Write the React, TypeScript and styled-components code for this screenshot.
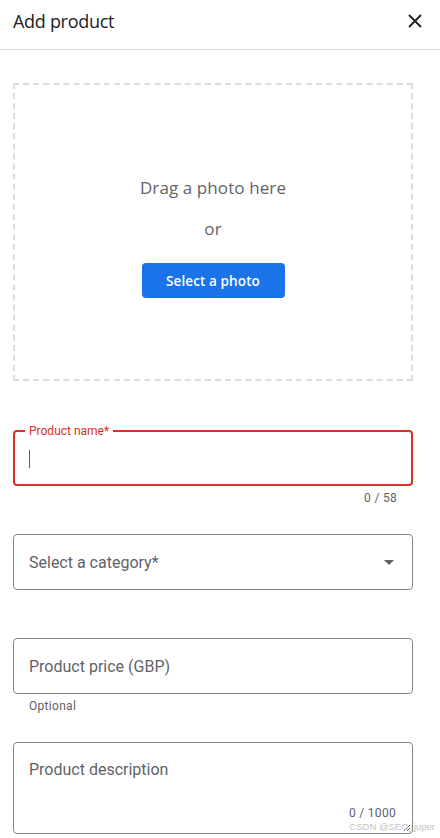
import React from "react";
import styled, { createGlobalStyle } from "styled-components";

const Global = createGlobalStyle`
  html, body { margin: 0; padding: 0; background: #fff; }
  body { font-family: Roboto, "Noto Sans", Arial, sans-serif; color: #202124; }
  * { box-sizing: border-box; }
`;

const Page = styled.div`
  position: relative;
  width: 440px;
  height: 838px;
  overflow: hidden;
  background: #fff;
`;

const Header = styled.header`
  height: 50px;
  display: flex;
  align-items: center;
  justify-content: space-between;
  padding: 0 9px 0 13px;
  border-bottom: 1px solid #dadce0;
`;

const Title = styled.h1`
  margin: 0;
  margin-top: -8px;
  font-family: "Open Sans", Roboto, sans-serif;
  font-weight: 400;
  font-size: 18px;
  letter-spacing: -0.3px;
  color: #202124;
`;

const CloseButton = styled.button`
  width: 32px;
  height: 32px;
  margin-top: -8px;
  border: 0;
  background: transparent;
  padding: 0;
  display: flex;
  align-items: center;
  justify-content: center;
  cursor: pointer;
`;

const Body = styled.main`
  padding: 33px 27px 0 13px;
  display: flex;
  flex-direction: column;
`;

const DropZone = styled.div`
  height: 298px;
  border: 2px dashed #dadce0;
  border-radius: 2px;
  display: flex;
  flex-direction: column;
  align-items: center;
  padding-top: 91px;
`;

const DropText = styled.div`
  font-family: "Open Sans", Roboto, sans-serif;
  font-size: 17px;
  line-height: 24px;
  letter-spacing: 0.1px;
  color: #5f6368;
`;

const OrText = styled(DropText)`
  margin-top: 17px;
`;

const BlueButton = styled.button`
  margin-top: 22px;
  height: 35px;
  width: 143px;
  border: 0;
  border-radius: 4px;
  background: #1a73e8;
  color: #fff;
  font-family: "Open Sans", Roboto, sans-serif;
  font-weight: 600;
  font-size: 13.5px;
  letter-spacing: 0.1px;
  cursor: pointer;
`;

const Field = styled.div<{ $focused?: boolean; $height?: number; $gap: number }>`
  position: relative;
  margin-top: ${(p) => p.$gap}px;
  height: ${(p) => p.$height ?? 56}px;
  border: ${(p) => (p.$focused ? "2px solid #d93025" : "1px solid #80868b")};
  border-radius: 4px;
  padding: ${(p) => (p.$focused ? "0 14px" : "0 15px")};
  display: flex;
  align-items: ${(p) => (p.$height ? "flex-start" : "center")};
`;

const FloatLabel = styled.span`
  position: absolute;
  left: 10px;
  top: -9px;
  padding: 0 4px;
  background: #fff;
  font-size: 12px;
  line-height: 16px;
  color: #d93025;
`;

const Caret = styled.span`
  width: 1px;
  height: 18px;
  background: #d93025;
  margin-top: 2px;
`;

const Placeholder = styled.span<{ $top?: number }>`
  font-size: 16px;
  color: #5f6368;
  margin-top: ${(p) => p.$top ?? 0}px;
  flex: 1;
`;

const Hint = styled.div<{ $align: "left" | "right" }>`
  padding: 4px 16px 0;
  font-size: 12px;
  line-height: 16px;
  color: #5f6368;
  text-align: ${(p) => p.$align};
  letter-spacing: 0.3px;
`;

const InnerCounter = styled.span`
  position: absolute;
  right: 16px;
  bottom: 12px;
  font-size: 12px;
  line-height: 16px;
  color: #5f6368;
  letter-spacing: 0.3px;
`;

const ResizeHandle = styled.svg`
  position: absolute;
  right: 1px;
  bottom: 1px;
`;

const Watermark = styled.span`
  position: absolute;
  right: 5px;
  bottom: 6px;
  font-family: Arial, "Liberation Sans", sans-serif;
  font-size: 9.5px;
  line-height: 11px;
  color: #c4c4c4;
  pointer-events: none;
`;

export default function App() {
  return (
    <Page>
      <Global />
      <Header>
        <Title>Add product</Title>
        <CloseButton aria-label="Close">
          <svg width="14" height="14" viewBox="0 0 14 14">
            <path d="M1 1L13 13M13 1L1 13" stroke="#202124" strokeWidth="1.9" />
          </svg>
        </CloseButton>
      </Header>
      <Body>
        <DropZone>
          <DropText>Drag a photo here</DropText>
          <OrText>or</OrText>
          <BlueButton>Select a photo</BlueButton>
        </DropZone>

        <Field $focused $gap={49}>
          <FloatLabel>Product name*</FloatLabel>
          <Caret />
        </Field>
        <Hint $align="right">0 / 58</Hint>

        <Field $gap={28}>
          <Placeholder>Select a category*</Placeholder>
          <svg width="10" height="5" viewBox="0 0 10 5" style={{ marginRight: 3 }}>
            <path d="M0 0L5 5L10 0Z" fill="#5f6368" />
          </svg>
        </Field>

        <Field $gap={48}>
          <Placeholder>Product price (GBP)</Placeholder>
        </Field>
        <Hint $align="left">Optional</Hint>

        <Field $gap={28} $height={92}>
          <Placeholder $top={17}>Product description</Placeholder>
          <InnerCounter>0 / 1000</InnerCounter>
          <ResizeHandle width="8" height="8" viewBox="0 0 8 8">
            <path d="M7 1L1 7M7 4L4 7" stroke="#5f6368" strokeWidth="1" />
          </ResizeHandle>
        </Field>
      </Body>
      <Watermark>CSDN @SEO_juper</Watermark>
    </Page>
  );
}
